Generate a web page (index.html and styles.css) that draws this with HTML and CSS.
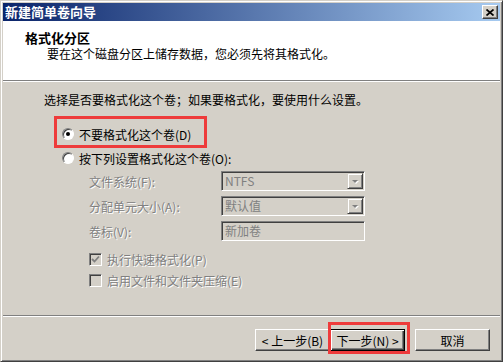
FILE: index.html
```html
<!DOCTYPE html>
<html lang="zh-CN">
<head>
    <meta charset="UTF-8">
    <title>新建简单卷向导</title>
    <link rel="stylesheet" href="styles.css">
</head>
<body>
    <div class="window">
        <div class="titlebar">
            <span class="title">新建简单卷向导</span>
            <span class="close">
                <svg width="8" height="7" viewBox="0 0 8 7">
                    <path d="M0.5 0.5 L7.5 6.5 M7.5 0.5 L0.5 6.5" stroke="#000" stroke-width="1.7"/>
                </svg>
            </span>
        </div>

        <div class="header">
            <div class="heading">格式化分区</div>
            <div class="subheading">要在这个磁盘分区上储存数据，您必须先将其格式化。</div>
        </div>

        <div class="content">
            <p class="intro">选择是否要格式化这个卷；如果要格式化，要使用什么设置。</p>

            <div class="option first">
                <span class="radio checked"></span>
                <span>不要格式化这个卷(D)</span>
            </div>
            <div class="option">
                <span class="radio"></span>
                <span>按下列设置格式化这个卷(O):</span>
            </div>

            <div class="settings">
                <span class="disabled">文件系统(F):</span>
                <div class="field">NTFS<span class="drop"></span></div>

                <span class="disabled">分配单元大小(A):</span>
                <div class="field">默认值<span class="drop"></span></div>

                <span class="disabled">卷标(V):</span>
                <div class="field">新加卷</div>
            </div>

            <div class="check first">
                <span class="box">
                    <svg width="9" height="9" viewBox="0 0 9 9">
                        <path d="M1 4 L3.5 6.5 L8 1.5" fill="none" stroke="#808080" stroke-width="1.8"/>
                    </svg>
                </span>
                <span class="disabled">执行快速格式化(P)</span>
            </div>
            <div class="check">
                <span class="box"></span>
                <span class="disabled">启用文件和文件夹压缩(E)</span>
            </div>
        </div>

        <div class="footer">
            <button class="btn back">&lt; 上一步(B)</button>
            <button class="btn default">下一步(N) &gt;</button>
            <button class="btn">取消</button>
        </div>

        <!-- red annotation boxes -->
        <div class="mark mark-option"></div>
        <div class="mark mark-next"></div>
    </div>
</body>
</html>
```

FILE: styles.css
```css
body {
    margin: 0;
    font-family: "Noto Sans CJK SC", "Liberation Sans", sans-serif;
    font-size: 12px;
    color: #000;
}

.window {
    position: relative;
    width: 503px;
    height: 362px;
    box-sizing: border-box;
    background: #D4D0C8;
    border: 1px solid;
    border-color: #D4D0C8 #404040 #404040 #D4D0C8;
    box-shadow: inset 1px 1px #fff, inset -1px -1px #808080;
    padding: 2px;
    display: flex;
    flex-direction: column;
}

.titlebar {
    height: 18px;
    display: flex;
    align-items: center;
    justify-content: space-between;
    background: linear-gradient(to right, #0A246A, #A6CAF0);
    padding: 0 2px 0 2px;
}

.title {
    color: #fff;
    font-weight: bold;
    font-size: 13px;
    line-height: 18px;
}

.close {
    width: 16px;
    height: 14px;
    box-sizing: border-box;
    background: #D4D0C8;
    border: 1px solid;
    border-color: #fff #404040 #404040 #fff;
    box-shadow: inset -1px -1px #808080;
    display: flex;
    align-items: center;
    justify-content: center;
}

.header {
    height: 50px;
    background: #fff;
    padding-top: 9px;
    border-bottom: 1px solid #808080;
}

.heading {
    font-size: 13px;
    font-weight: bold;
    line-height: 16px;
    padding-left: 22px;
}

.subheading {
    line-height: 16px;
    padding-left: 44px;
}

.content {
    border-top: 1px solid #fff;
    padding-top: 11px;
    box-sizing: border-box;
    height: 234px;
}

.intro {
    margin: 0 0 0 41px;
    line-height: 14px;
}

.option {
    display: flex;
    align-items: center;
    gap: 5px;
    height: 16px;
    margin: 8px 0 0 59px;
}

.option.first {
    margin-top: 19px;
}

.radio {
    position: relative;
    width: 12px;
    height: 12px;
    box-sizing: border-box;
    border-radius: 50%;
    background: #fff;
    border: 1px solid;
    border-color: #808080 #fff #fff #808080;
    box-shadow: inset 1px 1px #404040;
}

.radio.checked::after {
    content: "";
    position: absolute;
    left: 3px;
    top: 3px;
    width: 4px;
    height: 4px;
    border-radius: 50%;
    background: #000;
}

.settings {
    display: grid;
    grid-template-columns: 132px 144px;
    grid-auto-rows: 20px;
    row-gap: 5px;
    align-items: center;
    margin: 5px 0 0 86px;
}

.disabled {
    color: #808080;
    text-shadow: 1px 1px #fff;
}

.field {
    position: relative;
    height: 20px;
    box-sizing: border-box;
    border: 1px solid;
    border-color: #808080 #fff #fff #808080;
    box-shadow: inset 1px 1px #404040, inset -1px -1px #D4D0C8;
    padding-left: 3px;
    line-height: 18px;
    color: #808080;
}

.drop {
    position: absolute;
    right: 1px;
    top: 1px;
    width: 16px;
    height: 16px;
    box-sizing: border-box;
    border: 1px solid;
    border-color: #D4D0C8 #404040 #404040 #D4D0C8;
    box-shadow: inset 1px 1px #fff, inset -1px -1px #808080;
}

.drop::after {
    content: "";
    position: absolute;
    left: 4px;
    top: 6px;
    border-left: 3px solid transparent;
    border-right: 3px solid transparent;
    border-top: 3px solid #808080;
    filter: drop-shadow(1px 1px 0 #fff);
}

.check {
    display: flex;
    align-items: center;
    gap: 5px;
    height: 16px;
    margin: 5px 0 0 86px;
}

.check.first {
    margin-top: 10px;
}

.box {
    width: 13px;
    height: 13px;
    box-sizing: border-box;
    border: 1px solid;
    border-color: #808080 #fff #fff #808080;
    box-shadow: inset 1px 1px #404040, inset -1px -1px #D4D0C8;
    display: flex;
    align-items: center;
    justify-content: center;
}

.footer {
    flex: 1;
    border-top: 1px solid #808080;
    box-shadow: inset 0 1px #fff;
    padding: 13px 10px 0 0;
    display: flex;
    justify-content: flex-end;
    align-items: flex-start;
}

.btn {
    width: 75px;
    height: 22px;
    padding: 0;
    font-family: inherit;
    font-size: 12px;
    color: #000;
    background: #D4D0C8;
    border: 1px solid;
    border-color: #fff #404040 #404040 #fff;
    box-shadow: inset -1px -1px #808080;
}

.btn.default {
    margin-right: 10px;
    border-color: #000;
    box-shadow: inset 1px 1px #fff, inset -1px -1px #404040, inset -2px -2px #808080;
}

.mark {
    position: absolute;
    box-sizing: border-box;
    border: 3px solid #EE3B3B;
}

.mark-option {
    left: 53px;
    top: 115px;
    width: 153px;
    height: 32px;
}

.mark-next {
    left: 327px;
    top: 321px;
    width: 82px;
    height: 32px;
}
```
